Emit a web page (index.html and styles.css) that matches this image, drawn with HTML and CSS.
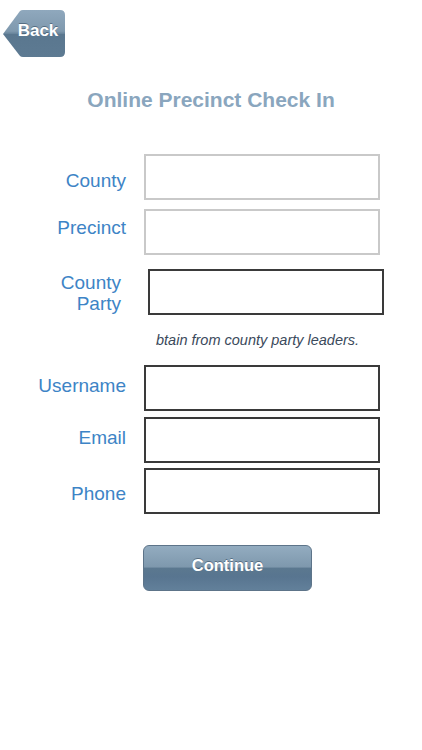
FILE: index.html
```html
<!DOCTYPE html>
<html>
<head>
<meta charset="utf-8">
<link rel="stylesheet" href="styles.css">
</head>
<body>
<div class="page">
  <div class="topbar">
    <button class="back"><span>Back</span></button>
  </div>
  <h1 class="title">Online Precinct Check In</h1>
  <form class="form">
    <div class="row r-county">
      <label class="lbl">County</label>
      <input class="field light" type="text">
    </div>
    <div class="row r-precinct">
      <label class="lbl">Precinct</label>
      <input class="field light" type="text">
    </div>
    <div class="row r-party">
      <label class="lbl party-lbl">County<br>Party</label>
      <input class="field dark" type="text">
    </div>
    <div class="hint">btain from county party leaders.</div>
    <div class="row r-user">
      <label class="lbl">Username</label>
      <input class="field dark" type="text">
    </div>
    <div class="row r-email">
      <label class="lbl">Email</label>
      <input class="field dark" type="text">
    </div>
    <div class="row r-phone">
      <label class="lbl">Phone</label>
      <input class="field dark" type="text">
    </div>
    <div class="actions">
      <button type="button" class="continue">Continue</button>
    </div>
  </form>
</div>
</body>
</html>
```

FILE: styles.css
```css
html, body {
  margin: 0;
  padding: 0;
  background: #ffffff;
}
.page {
  width: 422px;
  height: 750px;
  font-family: "Liberation Sans", Arial, sans-serif;
}
.topbar {
  padding: 10px 0 0 3px;
  height: 47px;
}
.back {
  width: 62px;
  height: 47px;
  border: 0;
  padding: 0 0 0 8px;
  margin: 0;
  display: flex;
  align-items: center;
  justify-content: center;
  background: linear-gradient(to bottom, #8fa8bd 0%, #7f99ae 45%, #6a869d 50%, #5a778f 52%, #5d7a92 100%);
  clip-path: path('M17,1 Q18,0 20,0 H57 Q62,0 62,5 V42 Q62,47 57,47 H20 Q18,47 17,46 L0,24 Z');
  color: #ffffff;
  font-family: "Liberation Sans", Arial, sans-serif;
  font-weight: bold;
  font-size: 17px;
  text-shadow: 0 -1px 0 rgba(40, 60, 80, 0.5);
}
.back span {
  margin-top: -6px;
}
.title {
  margin: 31px 0 0 0;
  text-align: center;
  font-size: 21px;
  line-height: 24px;
  font-weight: bold;
  color: #8aa6be;
}
.form {
  margin-top: 42px;
  display: flex;
  flex-direction: column;
}
.row {
  display: flex;
  align-items: center;
}
.lbl {
  width: 126px;
  text-align: right;
  font-size: 19px;
  line-height: 21px;
  color: #3d84c6;
  box-sizing: border-box;
}
.field {
  margin: 0 0 0 18px;
  width: 236px;
  height: 46px;
  box-sizing: border-box;
  background: #fff;
  padding: 0 6px;
  outline: none;
}
.field.light {
  border: 2px solid #c9c9c9;
}
.field.dark {
  border: 2px solid #3a3a3a;
}
.r-county .lbl { padding-top: 6px; }
.r-precinct { margin-top: 9px; }
.r-precinct .lbl { padding-bottom: 10px; }
.r-party { margin-top: 14px; }
.r-party .lbl { padding-right: 5px; padding-top: 2px; }
.r-party .field { margin-left: 22px; }
.hint {
  margin: 14px 0 0 156px;
  white-space: nowrap;
  font-size: 14.5px;
  line-height: 22px;
  font-style: italic;
  color: #3b4a5c;
}
.r-user { margin-top: 14px; }
.r-user .lbl { padding-bottom: 6px; }
.r-email { margin-top: 6px; }
.r-email .lbl { padding-bottom: 5px; }
.r-phone { margin-top: 5px; }
.r-phone .lbl { padding-top: 5px; }
.actions {
  margin: 31px 0 0 143px;
}
.continue {
  width: 169px;
  height: 46px;
  border: 1px solid #5d7489;
  border-radius: 6px;
  padding: 0 0 6px 0;
  background: linear-gradient(to bottom, #93acc0 0%, #7e98ad 48%, #5b788f 50%, #587590 70%, #62809a 100%);
  color: #ffffff;
  font-family: "Liberation Sans", Arial, sans-serif;
  font-weight: bold;
  font-size: 16.5px;
  text-shadow: 0 -1px 0 rgba(40, 60, 80, 0.5);
}
```
